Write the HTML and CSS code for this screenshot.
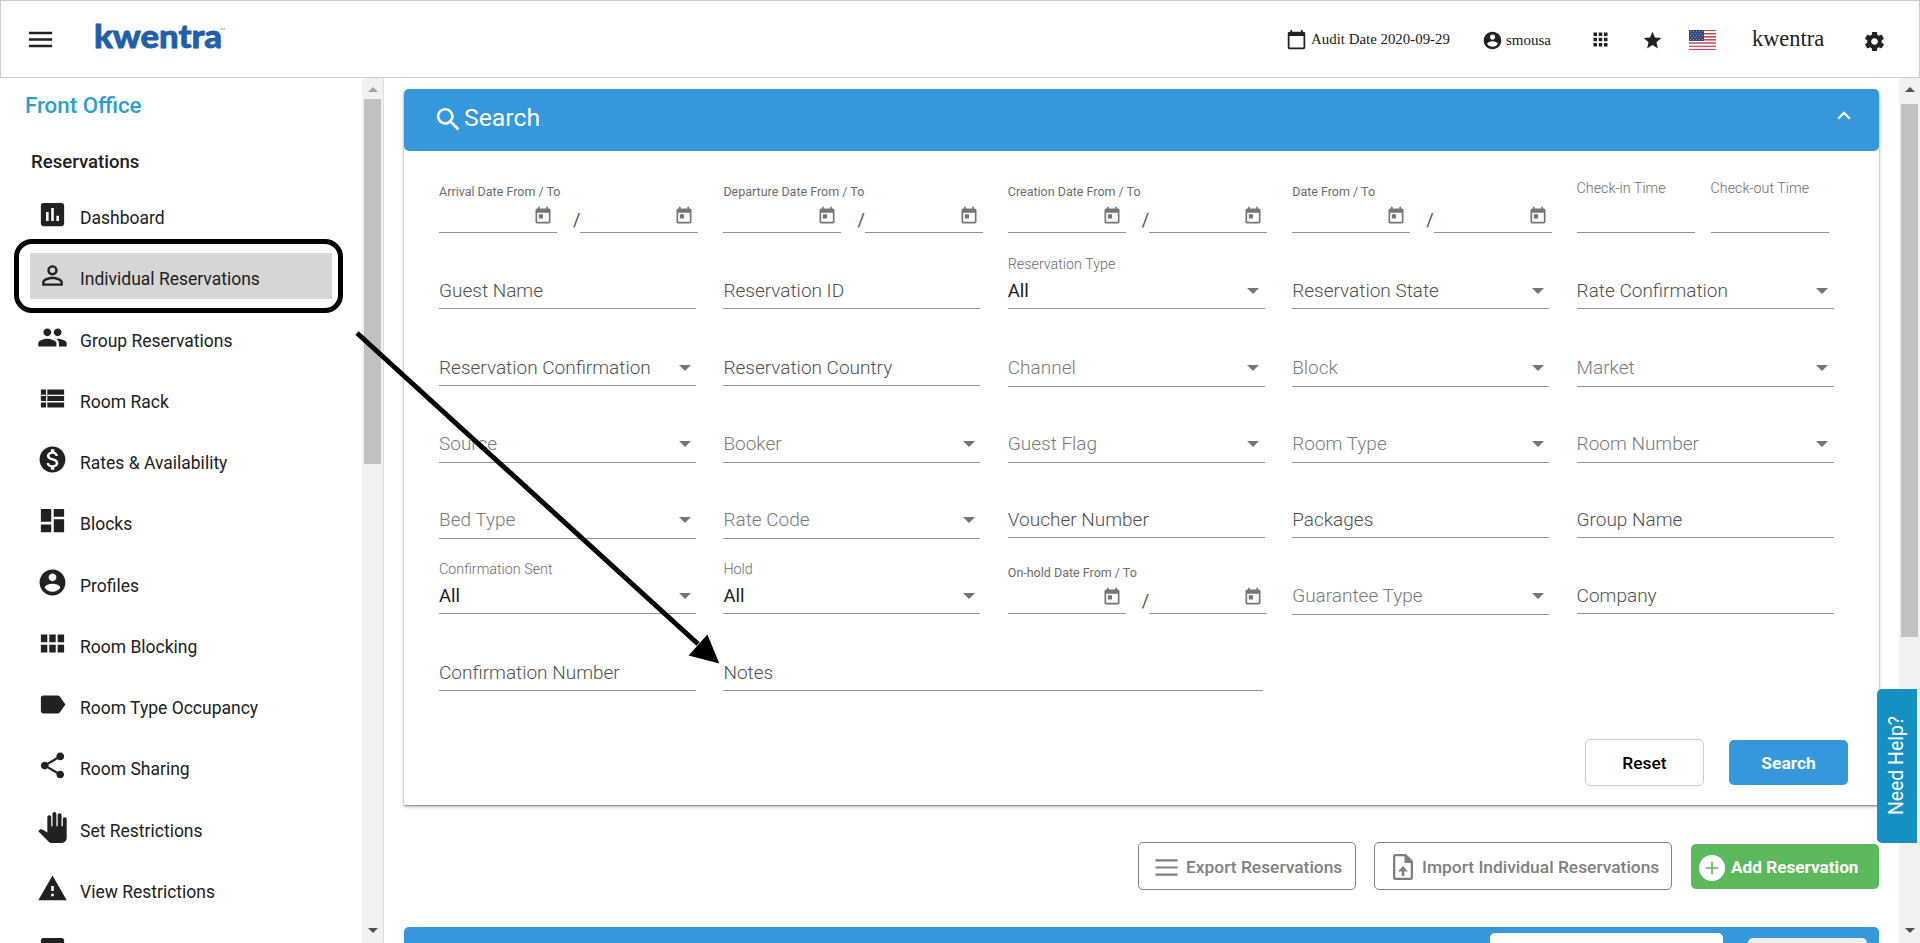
FILE: index.html
```
<!DOCTYPE html>
<html lang="en">
<head>
<meta charset="utf-8">
<title>Kwentra - Individual Reservations</title>
<link rel="stylesheet" href="styles.css">
</head>
<body>
<svg class="sprite" aria-hidden="true">
  <symbol id="menu" viewBox="0 0 24 24"><path d="M3 18h18v-2H3v2zm0-5h18v-2H3v2zm0-7v2h18V6H3z"/></symbol>
  <symbol id="chart" viewBox="0 0 24 24"><path d="M19 3H5c-1.1 0-2 .9-2 2v14c0 1.1.9 2 2 2h14c1.1 0 2-.9 2-2V5c0-1.1-.9-2-2-2zM9 17H7v-7h2v7zm4 0h-2V7h2v10zm4 0h-2v-4h2v4z"/></symbol>
  <symbol id="person" viewBox="0 0 24 24"><path d="M12 5.9a2.1 2.1 0 1 1 0 4.2 2.1 2.1 0 0 1 0-4.2m0 9c2.97 0 6.1 1.46 6.1 2.1v1.1H5.9V17c0-.64 3.13-2.1 6.1-2.1M12 4C9.79 4 8 5.79 8 8s1.79 4 4 4 4-1.79 4-4-1.79-4-4-4zm0 9c-2.67 0-8 1.34-8 4v3h16v-3c0-2.66-5.33-4-8-4z"/></symbol>
  <symbol id="people" viewBox="0 0 24 24"><path d="M16 11c1.66 0 2.99-1.34 2.99-3S17.66 5 16 5s-3 1.34-3 3 1.34 3 3 3zm-8 0c1.66 0 2.99-1.34 2.99-3S9.66 5 8 5 5 6.34 5 8s1.34 3 3 3zm0 2c-2.33 0-7 1.17-7 3.5V19h14v-2.5c0-2.33-4.67-3.5-7-3.5zm8 0c-.29 0-.62.02-.97.05 1.16.84 1.97 1.97 1.97 3.45V19h6v-2.5c0-2.33-4.67-3.5-7-3.5z"/></symbol>
  <symbol id="list" viewBox="0 0 24 24"><path d="M3 14h4v-4H3v4zm0 5h4v-4H3v4zM3 9h4V5H3v4zm5 5h13v-4H8v4zm0 5h13v-4H8v4zM8 5v4h13V5H8z"/></symbol>
  <symbol id="money" viewBox="0 0 24 24"><path d="M12 2C6.48 2 2 6.48 2 12s4.48 10 10 10 10-4.48 10-10S17.52 2 12 2zm1.41 16.09V20h-2.67v-1.93c-1.71-.36-3.16-1.46-3.27-3.4h1.96c.1 1.05.82 1.87 2.65 1.87 1.96 0 2.4-.98 2.4-1.59 0-.83-.44-1.61-2.67-2.14-2.48-.6-4.18-1.62-4.18-3.67 0-1.72 1.39-2.84 3.11-3.21V4h2.67v1.95c1.86.45 2.79 1.86 2.85 3.39H14.3c-.05-1.11-.64-1.87-2.22-1.87-1.5 0-2.4.68-2.4 1.64 0 .84.65 1.39 2.67 1.91s4.18 1.39 4.18 3.91c-.01 1.83-1.38 2.83-3.12 3.16z"/></symbol>
  <symbol id="blocks" viewBox="0 0 24 24"><path d="M3 13h8V3H3v10zm0 8h8v-6H3v6zm10 0h8V11h-8v10zm0-18v6h8V3h-8z"/></symbol>
  <symbol id="account" viewBox="0 0 24 24"><path d="M12 2C6.48 2 2 6.48 2 12s4.48 10 10 10 10-4.48 10-10S17.52 2 12 2zm0 3c1.66 0 3 1.34 3 3s-1.34 3-3 3-3-1.34-3-3 1.34-3 3-3zm0 14.2c-2.5 0-4.71-1.28-6-3.22.03-1.99 4-3.08 6-3.08 1.99 0 5.97 1.09 6 3.08-1.29 1.94-3.5 3.22-6 3.22z"/></symbol>
  <symbol id="modules" viewBox="0 0 24 24"><path d="M3 11h5V5H3v6zm0 8h5v-6H3v6zm6.5 0h5v-6h-5v6zm6.5 0h5v-6h-5v6zm-6.5-8h5V5h-5v6zM16 5v6h5V5h-5z"/></symbol>
  <symbol id="label" viewBox="0 0 24 24"><path d="M17.63 5.84C17.27 5.33 16.67 5 16 5L5 5.01C3.9 5.01 3 5.9 3 7v10c0 1.1.9 1.99 2 1.99L16 19c.67 0 1.27-.33 1.63-.84L22 12l-4.37-6.16z"/></symbol>
  <symbol id="share" viewBox="0 0 24 24"><path d="M18 16.08c-.76 0-1.44.3-1.96.77L8.91 12.7c.05-.23.09-.46.09-.7s-.04-.47-.09-.7l7.05-4.11c.54.5 1.25.81 2.04.81 1.66 0 3-1.34 3-3s-1.34-3-3-3-3 1.34-3 3c0 .24.04.47.09.7L8.04 9.81C7.5 9.31 6.79 9 6 9c-1.66 0-3 1.34-3 3s1.34 3 3 3c.79 0 1.5-.31 2.04-.81l7.12 4.16c-.05.21-.08.43-.08.65 0 1.61 1.31 2.92 2.92 2.92s2.92-1.31 2.92-2.92-1.31-2.92-2.92-2.92z"/></symbol>
  <symbol id="hand" viewBox="0 0 24 24"><path d="M23 5.5V20c0 2.2-1.8 4-4 4h-7.3c-1.08 0-2.1-.43-2.85-1.19L1 14.83s1.26-1.23 1.3-1.25c.22-.19.49-.29.79-.29.22 0 .42.06.6.16.04.01 4.31 2.46 4.31 2.46V4c0-.83.67-1.5 1.5-1.5S11 3.17 11 4v7h1V1.5c0-.83.67-1.5 1.5-1.5S15 .67 15 1.5V11h1V2.5c0-.83.67-1.5 1.5-1.5s1.5.67 1.5 1.5V11h1V5.5c0-.83.67-1.5 1.5-1.5s1.5.67 1.5 1.5z"/></symbol>
  <symbol id="warning" viewBox="0 0 24 24"><path d="M1 21h22L12 2 1 21zm12-3h-2v-2h2v2zm0-4h-2v-4h2v4z"/></symbol>
  <symbol id="square" viewBox="0 0 24 24"><path d="M19 3H5c-1.1 0-2 .9-2 2v14c0 1.1.9 2 2 2h14c1.1 0 2-.9 2-2V5c0-1.1-.9-2-2-2z"/></symbol>
  <symbol id="calendar" viewBox="0 0 24 24"><path d="M20 3h-1V1h-2v2H7V1H5v2H4c-1.1 0-2 .9-2 2v16c0 1.1.9 2 2 2h16c1.1 0 2-.9 2-2V5c0-1.1-.9-2-2-2zm0 18H4V8h16v13z"/></symbol>
  <symbol id="apps" viewBox="0 0 24 24"><path d="M4 8h4V4H4v4zm6 12h4v-4h-4v4zm-6 0h4v-4H4v4zm0-6h4v-4H4v4zm6 0h4v-4h-4v4zm6-10v4h4V4h-4zm-6 4h4V4h-4v4zm6 6h4v-4h-4v4zm0 6h4v-4h-4v4z"/></symbol>
  <symbol id="star" viewBox="0 0 24 24"><path d="M12 17.27L18.18 21l-1.64-7.03L22 9.24l-7.19-.61L12 2 9.19 8.63 2 9.24l5.46 4.73L5.82 21z"/></symbol>
  <symbol id="gear" viewBox="0 0 24 24"><path d="M19.43 12.98c.04-.32.07-.64.07-.98s-.03-.66-.07-.98l2.11-1.65c.19-.15.24-.42.12-.64l-2-3.46c-.12-.22-.39-.3-.61-.22l-2.49 1c-.52-.4-1.08-.73-1.69-.98l-.38-2.65C14.46 2.18 14.25 2 14 2h-4c-.25 0-.46.18-.49.42l-.38 2.65c-.61.25-1.17.59-1.69.98l-2.49-1c-.23-.09-.49 0-.61.22l-2 3.46c-.13.22-.07.49.12.64l2.11 1.65c-.04.32-.07.65-.07.98s.03.66.07.98l-2.11 1.65c-.19.15-.24.42-.12.64l2 3.46c.12.22.39.3.61.22l2.49-1c.52.4 1.08.73 1.69.98l.38 2.65c.03.24.24.42.49.42h4c.25 0 .46-.18.49-.42l.38-2.65c.61-.25 1.17-.59 1.69-.98l2.49 1c.23.09.49 0 .61-.22l2-3.46c.12-.22.07-.49-.12-.64l-2.11-1.65zM12 15.5c-1.93 0-3.5-1.57-3.5-3.5s1.57-3.5 3.5-3.5 3.5 1.57 3.5 3.5-1.57 3.5-3.5 3.5z"/></symbol>
  <symbol id="search" viewBox="0 0 24 24"><path d="M15.5 14h-.79l-.28-.27C15.41 12.59 16 11.11 16 9.5 16 5.91 13.09 3 9.5 3S3 5.91 3 9.5 5.91 16 9.5 16c1.61 0 3.09-.59 4.23-1.57l.27.28v.79l5 4.99L20.49 19l-4.99-5zm-6 0C7.01 14 5 11.99 5 9.5S7.01 5 9.5 5 14 7.01 14 9.5 11.99 14 9.5 14z"/></symbol>
  <symbol id="today" viewBox="0 0 24 24"><path d="M19 3h-1V1h-2v2H8V1H6v2H5c-1.11 0-1.99.9-1.99 2L3 19c0 1.1.89 2 2 2h14c1.1 0 2-.9 2-2V5c0-1.1-.9-2-2-2zm0 16H5V8h14v11zM7 10h5v5H7z"/></symbol>
  <symbol id="upload" viewBox="0 0 20 26"><path fill-rule="evenodd" d="M2.5 0H13l7 7v16.500a2.500 2.500 0 0 1-2.500 2.500h-15A2.500 2.500 0 0 1 0 23.500v-21A2.500 2.500 0 0 1 2.500 0zM2.300 2.300v21.400h15.400V9H11.500V2.300zM10 12l5 5.500h-3.700V22H8.700v-4.500H5z"/></symbol>
</svg>

<header class="topbar">
  <svg class="burger"><use href="#menu"/></svg>
  <svg class="logo" viewBox="0 0 140 34"><text class="logo-word" x="0" y="26" textLength="128" lengthAdjust="spacingAndGlyphs">kwentra</text><text class="logo-tm" x="126" y="11">™</text></svg>
  <div class="top-right">
    <svg class="ico21"><use href="#calendar"/></svg>
    <span class="audit">Audit Date 2020-09-29</span>
    <svg class="ico21 user-ico"><use href="#account"/></svg>
    <span class="user">smousa</span>
    <svg class="ico21 apps-ico"><use href="#apps"/></svg>
    <svg class="ico21 star-ico"><use href="#star"/></svg>
    <svg class="flag" viewBox="0 0 27 20">
      <rect width="27" height="20" fill="#fff"/>
      <g fill="#c4474f"><rect width="27" height="1.100"/><rect y="3" width="27" height="1.500"/><rect y="6" width="27" height="1.600"/><rect y="9" width="27" height="1.600"/><rect y="12.200" width="27" height="1.500"/><rect y="15.700" width="27" height="1.200"/><rect y="18.900" width="27" height="1.100"/></g>
      <rect width="15" height="11" fill="#35447c"/>
      <g fill="#8c96b8"><path d="M1 1h1v1H1zM4 1h1v1H4zM7 1h1v1H7zM10 1h1v1h-1zM13 1h1v1h-1zM2.500 3h1v1h-1zM5.500 3h1v1h-1zM8.500 3h1v1h-1zM11.500 3h1v1h-1zM1 5h1v1H1zM4 5h1v1H4zM7 5h1v1H7zM10 5h1v1h-1zM13 5h1v1h-1zM2.500 7h1v1h-1zM5.500 7h1v1h-1zM8.500 7h1v1h-1zM11.500 7h1v1h-1zM1 9h1v1H1zM4 9h1v1H4zM7 9h1v1H7zM10 9h1v1h-1zM13 9h1v1h-1z"/></g>
    </svg>
    <span class="tenant">kwentra</span>
    <svg class="gear-ico"><use href="#gear"/></svg>
  </div>
</header>

<div class="shell">
  <aside class="sidebar">
    <nav class="nav">
      <h1 class="nav-title">Front Office</h1>
      <h2 class="nav-group">Reservations</h2>
      <ul class="nav-list">
        <li class="nav-item"><svg><use href="#chart"/></svg><span>Dashboard</span></li>
        <li class="nav-item active"><svg><use href="#person"/></svg><span>Individual Reservations</span></li>
        <li class="nav-item"><svg><use href="#people"/></svg><span>Group Reservations</span></li>
        <li class="nav-item"><svg><use href="#list"/></svg><span>Room Rack</span></li>
        <li class="nav-item"><svg><use href="#money"/></svg><span>Rates &amp; Availability</span></li>
        <li class="nav-item"><svg><use href="#blocks"/></svg><span>Blocks</span></li>
        <li class="nav-item"><svg><use href="#account"/></svg><span>Profiles</span></li>
        <li class="nav-item"><svg><use href="#modules"/></svg><span>Room Blocking</span></li>
        <li class="nav-item"><svg><use href="#label"/></svg><span>Room Type Occupancy</span></li>
        <li class="nav-item"><svg><use href="#share"/></svg><span>Room Sharing</span></li>
        <li class="nav-item"><svg><use href="#hand"/></svg><span>Set Restrictions</span></li>
        <li class="nav-item"><svg><use href="#warning"/></svg><span>View Restrictions</span></li>
        <li class="nav-item"><svg><use href="#square"/></svg></li>
      </ul>
    </nav>
    <div class="scroll side-scroll"><i class="up faded"></i><b class="thumb"></b><i class="down"></i></div>
  </aside>

  <main class="content">
    <section class="card">
      <div class="card-head"><svg class="head-ico"><use href="#search"/></svg><h3>Search</h3>
        <svg class="chevron" viewBox="0 0 14 9"><path d="M1.200 7.800 7 1.800l5.800 6" fill="none" stroke="#fff" stroke-width="2"/></svg></div>
      <div class="form">
        <div class="dates"><label>Arrival Date From / To</label><div class="pair"><div class="date"><svg><use href="#today"/></svg></div><em>/</em><div class="date"><svg><use href="#today"/></svg></div></div></div>
        <div class="dates"><label>Departure Date From / To</label><div class="pair"><div class="date"><svg><use href="#today"/></svg></div><em>/</em><div class="date"><svg><use href="#today"/></svg></div></div></div>
        <div class="dates"><label>Creation Date From / To</label><div class="pair"><div class="date"><svg><use href="#today"/></svg></div><em>/</em><div class="date"><svg><use href="#today"/></svg></div></div></div>
        <div class="dates"><label>Date From / To</label><div class="pair"><div class="date"><svg><use href="#today"/></svg></div><em>/</em><div class="date"><svg><use href="#today"/></svg></div></div></div>
        <div class="times"><div class="time"><label>Check-in Time</label></div><div class="time"><label>Check-out Time</label></div></div>

        <div class="field"><div class="control">Guest Name</div></div>
        <div class="field"><div class="control">Reservation ID</div></div>
        <div class="field"><label>Reservation Type</label><div class="control select filled">All</div></div>
        <div class="field"><div class="control select">Reservation State</div></div>
        <div class="field"><div class="control select">Rate Confirmation</div></div>

        <div class="field"><div class="control select">Reservation Confirmation</div></div>
        <div class="field"><div class="control">Reservation Country</div></div>
        <div class="field off"><div class="control select">Channel</div></div>
        <div class="field off"><div class="control select">Block</div></div>
        <div class="field off"><div class="control select">Market</div></div>

        <div class="field off"><div class="control select">Source</div></div>
        <div class="field off"><div class="control select">Booker</div></div>
        <div class="field off"><div class="control select">Guest Flag</div></div>
        <div class="field off"><div class="control select">Room Type</div></div>
        <div class="field off"><div class="control select">Room Number</div></div>

        <div class="field off"><div class="control select">Bed Type</div></div>
        <div class="field off"><div class="control select">Rate Code</div></div>
        <div class="field"><div class="control">Voucher Number</div></div>
        <div class="field"><div class="control">Packages</div></div>
        <div class="field"><div class="control">Group Name</div></div>

        <div class="field"><label>Confirmation Sent</label><div class="control select filled">All</div></div>
        <div class="field"><label>Hold</label><div class="control select filled">All</div></div>
        <div class="dates"><label>On-hold Date From / To</label><div class="pair"><div class="date"><svg><use href="#today"/></svg></div><em>/</em><div class="date"><svg><use href="#today"/></svg></div></div></div>
        <div class="field off"><div class="control select">Guarantee Type</div></div>
        <div class="field"><div class="control">Company</div></div>

        <div class="field"><div class="control">Confirmation Number</div></div>
        <div class="field wide"><div class="control">Notes</div></div>
      </div>
      <div class="card-actions"><button class="btn reset">Reset</button><button class="btn go">Search</button></div>
    </section>
    <div class="toolbar">
      <button class="btn outline export"><svg class="lines" viewBox="0 0 22 17"><path d="M0 1.300h22M0 8.500h22M0 15.700h22" stroke="#808080" stroke-width="2.200"/></svg><span>Export Reservations</span></button>
      <button class="btn outline import"><svg class="file"><use href="#upload"/></svg><span>Import Individual Reservations</span></button>
      <button class="btn add"><svg class="plus" viewBox="0 0 26 26"><circle cx="13" cy="13" r="13" fill="#fff"/><path d="M13 6.800v12.400M6.800 13h12.400" stroke="#5cb85c" stroke-width="1.600"/></svg><span>Add Reservation</span></button>
    </div>
    <section class="results"><div class="box-white"></div><div class="box-grey"></div></section>
  </main>
  <div class="scroll main-scroll"><i class="up"></i><b class="thumb"></b><i class="down"></i></div>
</div>

<div class="help"><span>Need Help?</span></div>
<div class="mark"></div>
<svg class="arrow" viewBox="0 0 1920 943"><path d="M357 333 698 644" stroke="#000" stroke-width="5"/><path d="M719.300 663.500 707.400 634.600 688.600 655.400z"/></svg>
</body>
</html>
```

FILE: styles.css
```
* { box-sizing: border-box; }
body {
  margin: 0;
  width: 1920px;
  height: 943px;
  overflow: hidden;
  background: #fff;
  color: #212121;
  font-family: Roboto, "Liberation Sans", sans-serif;
}
h1, h2, h3, ul { margin: 0; padding: 0; }
svg { display: block; fill: currentColor; flex: none; }
.sprite { position: absolute; width: 0; height: 0; }

/* top bar */
.topbar {
  display: flex;
  align-items: flex-start;
  height: 78px;
  border: 1px solid #ccc;
  padding: 0 33px 0 24px;
}
.burger { width: 31px; height: 31px; margin-top: 23px; }
.logo { width: 140px; height: 34px; margin: 21px 0 0 38px; overflow: visible; }
.logo-word { font: 900 32px Lato, sans-serif; fill: #1f5fae; stroke: #1f5fae; stroke-width: .8px; }
.logo-tm { font: 7px Lato, sans-serif; fill: #6d94c8; }
.top-right {
  display: flex;
  align-items: flex-start;
  margin-left: auto;
  font-family: "Liberation Serif", serif;
  white-space: nowrap;
}
.ico21 { width: 21px; height: 21px; margin-top: 28px; }
.audit { width: 139px; margin: 29px 0 0 4px; font-size: 14.9px; line-height: 18px; }
.user-ico { margin: 29px 0 0 32px; }
.user { width: 45px; margin: 30px 0 0 3px; font-size: 15px; line-height: 18px; }
.apps-ico { margin-left: 39px; }
.star-ico { margin: 29px 0 0 31px; }
.flag { width: 27px; height: 20px; margin: 29px 0 0 26px; }
.tenant { width: 73px; margin: 26px 0 0 36px; font-size: 22.4px; line-height: 24px; }
.gear-ico { width: 23px; height: 23px; margin: 29px 0 0 38px; }

/* shell */
.shell { display: flex; height: 865px; }
.sidebar { display: flex; width: 384px; border-right: 1px solid #ddd; }
.nav { flex: 1; padding: 13px 30px 0 30px; overflow: hidden; white-space: nowrap; }
.nav-title { margin-left: -5px; font-size: 22.3px; line-height: 28px; font-weight: 500; color: #2a9fd0; }
.nav-group { margin: 32px 0 0 1px; font-size: 18.6px; line-height: 22px; font-weight: 500; }
.nav-list { list-style: none; margin-top: 19px; }
.nav-item {
  display: flex;
  align-items: center;
  height: 46px;
  margin-bottom: 15.25px;
  padding: 0 7px;
  font-size: 17.5px;
  line-height: 22px;
}
.nav-item svg { width: 31px; height: 31px; margin-top: -1px; }
.nav-item span { margin: 6px 0 0 12px; }
.nav-item.active { background: #d6d6d6; }

/* scrollbars */
.scroll { display: flex; flex-direction: column; align-items: center; background: #f1f1f1; }
.side-scroll { width: 21px; }
.side-scroll .thumb { width: 17px; height: 365px; margin-top: 7px; background: #c1c1c1; }
.main-scroll { width: 21px; margin-left: auto; }
.main-scroll .thumb { width: 17px; height: 533px; margin-top: 12px; background: #c1c1c1; }
.up, .down { width: 0; height: 0; border: 5px solid transparent; }
.up { border-top: 0; border-bottom-color: #505050; margin-top: 9px; }
.up.faded { border-bottom-color: #a3a3a3; }
.down { border-bottom: 0; border-top-color: #505050; margin: auto 0 10px; }

/* search card */
.content { width: 1475px; margin-left: 20px; padding-top: 11px; }
.card { height: 716px; border-radius: 5px 5px 0 0; box-shadow: 0 1px 2px rgba(0,0,0,.45), 0 2px 5px rgba(0,0,0,.16); }
.card-head {
  display: flex;
  height: 62px;
  padding: 0 28px 0 29px;
  border-radius: 5px;
  background: #3598dc;
  color: #fff;
}
.head-ico { width: 31px; height: 31px; margin-top: 15px; }
.card-head h3 { font-size: 24.8px; line-height: 28px; font-weight: 400; margin-top: 15px; }
.chevron { width: 14px; height: 9px; margin: 22px 0 0 auto; }
.form {
  display: grid;
  grid-template-columns: repeat(5, 257px);
  column-gap: 27.4px;
  grid-template-rows: 82px 76px 77px 76px 76px 76px 77px;
  padding-left: 35px;
  font-weight: 300;
  color: #505050;
  white-space: nowrap;
}
.dates, .times, .field { display: flex; flex-direction: column; justify-content: flex-end; }
.form label { font-size: 14.3px; line-height: 18px; color: #6c6c6c; }
.field label { margin-bottom: 6px; }
.control {
  height: 30px;
  padding-bottom: 5px;
  border-bottom: 1px solid #949494;
  font-size: 19px;
  line-height: 24px;
}
.select { display: flex; justify-content: space-between; padding-right: 5.5px; }
.select::after {
  content: "";
  margin-top: 9px;
  border: 6px solid transparent;
  border-top-color: #757575;
  border-bottom: 0;
  height: 0;
}
.filled { color: #1c1c1c; font-weight: 400; font-size: 18.5px; }
.off .control { height: 31px; margin-bottom: -1px; color: #7a7a7a; }
.wide { width: 540px; }
.form .dates label { font-size: 12.5px; line-height: 16px; font-weight: 400; }
.pair { display: flex; height: 33px; }
.pair em { font-style: normal; font-weight: 400; font-size: 18px; line-height: 22px; width: 8px; margin: 9px 0 0 16px; }
.date { display: flex; justify-content: flex-end; width: 118px; padding: 6px 4px 0 0; border-bottom: 1px solid #949494; color: #757575; flex: none; }
.date svg { width: 20px; height: 20px; }
.times { flex-direction: row; justify-content: flex-start; align-items: flex-end; gap: 16px; }
.time { width: 118px; height: 55px; border-bottom: 1px solid #949494; }

.btn {
  display: flex;
  align-items: center;
  justify-content: center;
  border: 0;
  border-radius: 5px;
  padding: 0;
  background: #fff;
  font: 500 17.4px/22px Roboto, sans-serif;
  white-space: nowrap;
}
.card-actions { display: flex; align-items: center; gap: 25px; justify-content: flex-end; padding: 48px 31px 0 0; }
.reset { width: 119px; height: 47px; border: 1px solid #ccc; color: #000; }
.go { width: 119px; height: 45px; background: #3598dc; color: #fff; font-weight: 700; }

.toolbar { display: flex; align-items: center; justify-content: flex-end; margin-top: 37px; }
.toolbar span { margin-top: 2px; }
.outline { height: 48px; border: 1px solid #808080; color: #808080; justify-content: flex-start; }
.export { width: 218px; margin-right: 18px; padding-left: 16px; }
.lines { width: 23px; height: 17px; margin: 2px 8px 0 0; }
.import { width: 298px; margin-right: 19px; padding-left: 18px; }
.file { width: 20px; height: 26px; margin: 2px 9px 0 0; }
.add { width: 188px; height: 45px; background: #5cb85c; color: #fff; font-weight: 700; font-size: 17.2px; justify-content: flex-start; padding-left: 8px; }
.plus { width: 26px; height: 26px; margin: 3px 6px 0 0; }

.results { display: flex; height: 40px; margin-top: 37px; padding-right: 12px; justify-content: flex-end; border-radius: 5px 5px 0 0; background: #3598dc; }
.box-white { width: 233px; margin: 6px 25px 0 0; background: #fff; border-radius: 5px; }
.box-grey { width: 119px; margin-top: 11px; background: #eee; border-radius: 5px; }

/* floating help tab */
.help {
  position: absolute;
  left: 1877px;
  top: 689px;
  width: 40px;
  height: 154px;
  display: flex;
  align-items: center;
  justify-content: center;
  padding-right: 2px;
  border-radius: 5px 0 0 5px;
  background: #1590c2;
  color: #fff;
  font-size: 19.4px;
}
.help span { writing-mode: vertical-rl; transform: rotate(180deg); }

/* highlight box and arrow drawn over the page */
.mark {
  position: absolute;
  left: 14px;
  top: 239px;
  width: 329px;
  height: 74px;
  border: 5px solid #000;
  border-radius: 18px;
}
.arrow { position: absolute; left: 0; top: 0; width: 1920px; height: 943px; color: #000; pointer-events: none; }
```
